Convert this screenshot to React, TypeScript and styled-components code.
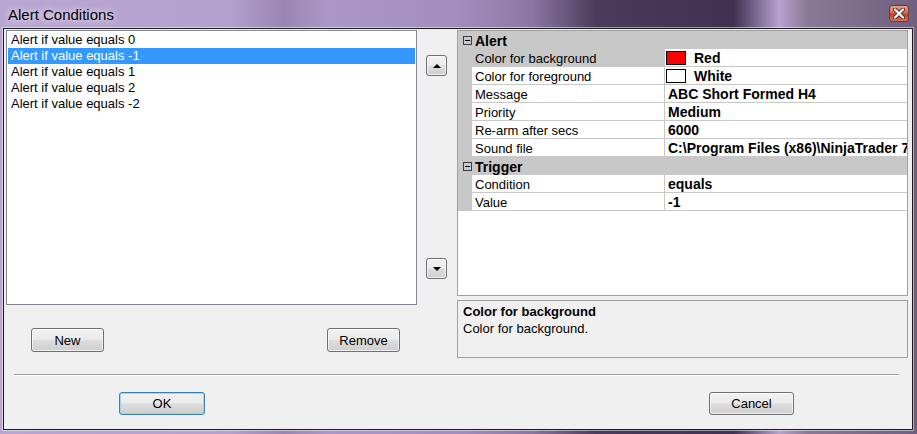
import React from "react";
import styled, { createGlobalStyle } from "styled-components";

const GlobalStyle = createGlobalStyle`
  html, body {
    margin: 0;
    padding: 0;
    background: #2e2538;
  }
  body {
    font-family: "Liberation Sans", Arial, sans-serif;
    font-size: 13px;
    color: #000;
  }
`;

const FONT = `"Liberation Sans", Arial, sans-serif`;
const GRID_LINE = "#c8c8c8";

// aero glass frame around the dialog
const Window = styled.div`
  width: 917px;
  height: 434px;
  display: flex;
  flex-direction: column;
  background: linear-gradient(
    90deg,
    #b9a6d3 0%,
    #b3a0cc 25%,
    #9b86b3 31%,
    #ac97c6 36%,
    #a38dbd 50%,
    #8c77a3 58%,
    #4a3b5a 65%,
    #3f3150 80%,
    #b8a2d0 85%,
    #8a7996 88%,
    #6f6080 100%
  );
`;

const TitleBar = styled.div`
  height: 28px;
  display: flex;
  align-items: center;
  justify-content: space-between;
  padding: 0 8px;
  box-sizing: border-box;
`;

const Title = styled.span`
  font-family: ${FONT};
  font-size: 15px;
  color: #000;
  text-shadow: 0 0 6px rgba(255, 255, 255, 0.8), 0 0 10px rgba(255, 255, 255, 0.5);
`;

const CloseButton = styled.div`
  width: 20px;
  height: 17px;
  align-self: flex-start;
  margin-top: 5px;
  box-sizing: border-box;
  border: 1px solid #6b3a3a;
  border-radius: 3px;
  background: linear-gradient(180deg, #e8a08c 0%, #d56a50 45%, #c2432a 55%, #d8704f 100%);
  display: flex;
  align-items: center;
  justify-content: center;
`;

const Client = styled.div`
  flex: 1;
  margin: 0 4px 4px 3px;
  border: 1px solid #1c1c1c;
  box-shadow: 0 0 0 1px rgba(255, 255, 255, 0.5);
  background: #f0f0f0;
  display: flex;
  flex-direction: column;
`;

const TopSection = styled.div`
  display: flex;
  height: 328px;
  padding: 1px 4px 0 2px;
`;

const LeftColumn = styled.div`
  width: 411px;
  display: flex;
  flex-direction: column;
`;

const ListBox = styled.div`
  height: 275px;
  box-sizing: border-box;
  border: 1px solid #828790;
  background: #fff;
  padding: 1px 1px 0 1px;
`;

const ListItem = styled.div<{ $selected?: boolean }>`
  height: 16px;
  line-height: 16px;
  padding-left: 3px;
  font-family: ${FONT};
  font-size: 13px;
  white-space: nowrap;
  background: ${(p) => (p.$selected ? "#3399ff" : "transparent")};
  color: ${(p) => (p.$selected ? "#fff" : "#000")};
`;

const ListButtons = styled.div`
  display: flex;
  justify-content: space-between;
  margin-top: 23px;
  padding: 0 17px 0 25px;
`;

const PushButton = styled.button<{ $w: number; $h?: number; $default?: boolean }>`
  width: ${(p) => p.$w}px;
  height: ${(p) => p.$h ?? 24}px;
  padding: 0;
  font-family: ${FONT};
  font-size: 13px;
  color: #000;
  border: 1px solid ${(p) => (p.$default ? "#3c7fb1" : "#707070")};
  border-radius: 3px;
  background: linear-gradient(180deg, #f2f2f2 0%, #ebebeb 48%, #dddddd 52%, #cfcfcf 100%);
  box-shadow: inset 0 0 0 1px ${(p) => (p.$default ? "#9fd5f3" : "rgba(255,255,255,0.7)")};
`;

const ArrowColumn = styled.div`
  width: 21px;
  margin: 0 10px 0 9px;
  display: flex;
  flex-direction: column;
`;

const ArrowButton = styled.div<{ $top: number }>`
  width: 21px;
  height: 21px;
  margin-top: ${(p) => p.$top}px;
  box-sizing: border-box;
  border: 1px solid #707070;
  border-radius: 3px;
  background: linear-gradient(180deg, #f2f2f2 0%, #ebebeb 48%, #dddddd 52%, #cfcfcf 100%);
  box-shadow: inset 0 0 0 1px rgba(255, 255, 255, 0.7);
  display: flex;
  align-items: center;
  justify-content: center;
`;

const Triangle = styled.div<{ $down?: boolean }>`
  width: 0;
  height: 0;
  border-left: 4px solid transparent;
  border-right: 4px solid transparent;
  ${(p) => (p.$down ? "border-top: 4px solid #000;" : "border-bottom: 4px solid #000;")}
`;

const RightColumn = styled.div`
  width: 451px;
  display: flex;
  flex-direction: column;
  gap: 4px;
`;

const PropertyGrid = styled.div`
  height: 266px;
  box-sizing: border-box;
  border: 1px solid #a0a0a0;
  background: #fff;
  overflow: hidden;
`;

const CategoryRow = styled.div`
  height: 18px;
  box-sizing: border-box;
  display: grid;
  grid-template-columns: 14px 1fr;
  background: ${GRID_LINE};
  font-family: ${FONT};
  font-size: 14px;
  font-weight: bold;
  line-height: 16px;
`;

const Expander = styled.div`
  display: flex;
  align-items: center;
  justify-content: flex-end;
`;

const MinusBox = styled.div`
  width: 9px;
  height: 9px;
  box-sizing: border-box;
  border: 1px solid #3c3c3c;
  display: flex;
  align-items: center;
  justify-content: center;
  &::after {
    content: "";
    width: 5px;
    height: 1px;
    background: #000;
  }
`;

const CategoryLabel = styled.div`
  padding: 2px 0 0 3px;
`;

const PropRow = styled.div`
  height: 18px;
  display: grid;
  grid-template-columns: 14px 193px 1fr;
  font-family: ${FONT};
  line-height: 14px;
`;

const Gutter = styled.div`
  background: ${GRID_LINE};
`;

const PropLabel = styled.div<{ $selected?: boolean }>`
  padding: 3px 0 0 3px;
  font-size: 13px;
  border-bottom: 1px solid ${GRID_LINE};
  border-right: 1px solid ${GRID_LINE};
  background: ${(p) => (p.$selected ? GRID_LINE : "#fff")};
  white-space: nowrap;
  overflow: hidden;
`;

const PropValue = styled.div`
  display: flex;
  align-items: center;
  gap: 8px;
  padding: 1px 0 0 3px;
  font-size: 14px;
  font-weight: bold;
  border-bottom: 1px solid ${GRID_LINE};
  white-space: nowrap;
  overflow: hidden;
`;

const Swatch = styled.span<{ $color: string }>`
  flex: none;
  width: 20px;
  height: 14px;
  margin-left: -2px;
  box-sizing: border-box;
  border: 1px solid #000;
  background: ${(p) => p.$color};
`;

const Description = styled.div`
  height: 58px;
  box-sizing: border-box;
  border: 1px solid #a0a0a0;
  background: #f0f0f0;
  padding: 2px 5px 0;
  font-family: ${FONT};
  font-size: 13px;
  line-height: 17px;
`;

const DescTitle = styled.div`
  font-weight: bold;
`;

const Separator = styled.div`
  margin: 16px 13px 0 10px;
  border-top: 1px solid #a0a0a0;
  border-bottom: 1px solid #fff;
`;

const Footer = styled.div`
  display: flex;
  justify-content: space-between;
  margin-top: 16px;
  padding: 0 118px 0 115px;
`;

type Prop = { label: string; value: string; swatch?: string };
type Category = { name: string; props: Prop[] };

const conditions = [
  "Alert if value equals 0",
  "Alert if value equals -1",
  "Alert if value equals 1",
  "Alert if value equals 2",
  "Alert if value equals -2",
];

const categories: Category[] = [
  {
    name: "Alert",
    props: [
      { label: "Color for background", value: "Red", swatch: "#ff0000" },
      { label: "Color for foreground", value: "White", swatch: "#ffffff" },
      { label: "Message", value: "ABC Short Formed H4" },
      { label: "Priority", value: "Medium" },
      { label: "Re-arm after secs", value: "6000" },
      { label: "Sound file", value: "C:\\Program Files (x86)\\NinjaTrader 7\\sounds\\Alert1.wav" },
    ],
  },
  {
    name: "Trigger",
    props: [
      { label: "Condition", value: "equals" },
      { label: "Value", value: "-1" },
    ],
  },
];

function CloseGlyph() {
  return (
    <svg width="12" height="11" viewBox="0 0 12 11">
      <path
        d="M2 1.5 L10 9.5 M10 1.5 L2 9.5"
        stroke="#5a2c2c"
        strokeWidth="4"
        strokeLinecap="round"
      />
      <path
        d="M2 1.5 L10 9.5 M10 1.5 L2 9.5"
        stroke="#fff"
        strokeWidth="2.2"
        strokeLinecap="round"
      />
    </svg>
  );
}

export default function App() {
  const [selected, setSelected] = React.useState(1);
  const [selectedProp] = React.useState("Color for background");

  return (
    <>
      <GlobalStyle />
      <Window>
        <TitleBar>
          <Title>Alert Conditions</Title>
          <CloseButton>
            <CloseGlyph />
          </CloseButton>
        </TitleBar>
        <Client>
          <TopSection>
            <LeftColumn>
              <ListBox>
                {conditions.map((c, i) => (
                  <ListItem key={c} $selected={i === selected} onClick={() => setSelected(i)}>
                    {c}
                  </ListItem>
                ))}
              </ListBox>
              <ListButtons>
                <PushButton $w={73}>New</PushButton>
                <PushButton $w={73}>Remove</PushButton>
              </ListButtons>
            </LeftColumn>

            <ArrowColumn>
              <ArrowButton $top={25}>
                <Triangle />
              </ArrowButton>
              <ArrowButton $top={182}>
                <Triangle $down />
              </ArrowButton>
            </ArrowColumn>

            <RightColumn>
              <PropertyGrid>
                {categories.map((cat) => (
                  <React.Fragment key={cat.name}>
                    <CategoryRow>
                      <Expander>
                        <MinusBox />
                      </Expander>
                      <CategoryLabel>{cat.name}</CategoryLabel>
                    </CategoryRow>
                    {cat.props.map((p) => (
                      <PropRow key={p.label}>
                        <Gutter />
                        <PropLabel $selected={p.label === selectedProp}>{p.label}</PropLabel>
                        <PropValue>
                          {p.swatch && <Swatch $color={p.swatch} />}
                          {p.value}
                        </PropValue>
                      </PropRow>
                    ))}
                  </React.Fragment>
                ))}
              </PropertyGrid>
              <Description>
                <DescTitle>Color for background</DescTitle>
                <div>Color for background.</div>
              </Description>
            </RightColumn>
          </TopSection>

          <Separator />

          <Footer>
            <PushButton $w={86} $h={23} $default>
              OK
            </PushButton>
            <PushButton $w={85} $h={23}>
              Cancel
            </PushButton>
          </Footer>
        </Client>
      </Window>
    </>
  );
}
